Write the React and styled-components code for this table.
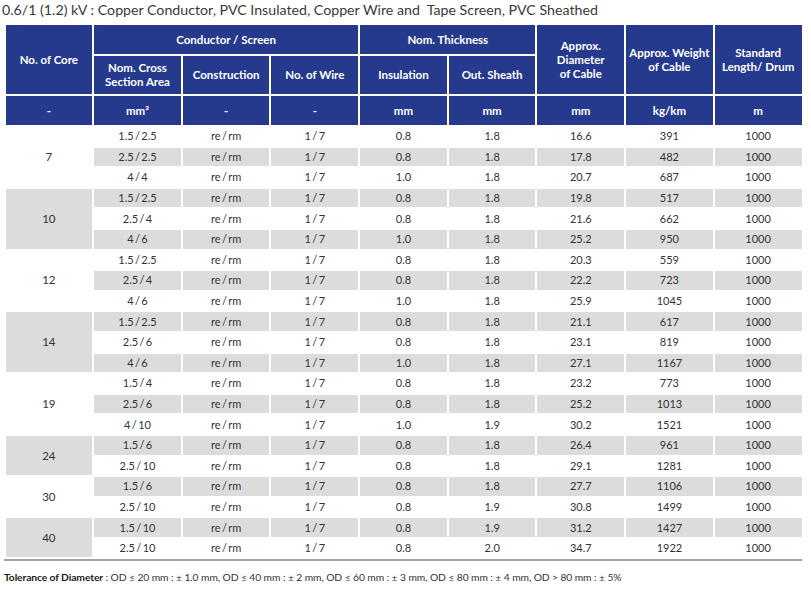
import React from 'react';
import styled, { createGlobalStyle } from 'styled-components';

const GlobalStyle = createGlobalStyle`
  body {
    margin: 0;
    background: #ffffff;
    font-family: Lato, "Liberation Sans", sans-serif;
  }
`;

const Page = styled.div`
  width: 811px;
  height: 597px;
  overflow: hidden;
`;

const Title = styled.h1`
  margin: 0;
  padding: 1px 0 0 2px;
  height: 22px;
  font-size: 14.2px;
  font-weight: 400;
  color: #3a3a3a;
  white-space: pre;
`;

const Table = styled.table`
  width: 800px;
  margin-left: 3.5px;
  table-layout: fixed;
  border-collapse: separate;
  border-spacing: 2.5px 2px;
`;

const HeadCell = styled.th`
  background: #263a8d;
  color: #ffffff;
  font-size: 11.5px;
  font-weight: 700;
  line-height: 14px;
  text-align: center;
  vertical-align: middle;
  padding: 0 2px;
  height: ${(p) => p.$h || 29}px;
`;

const Cell = styled.td`
  background: ${(p) => (p.$shade ? '#dcdcdd' : '#ffffff')};
  color: #333333;
  font-size: 11px;
  text-align: center;
  vertical-align: middle;
  height: 18.6px;
  padding: 0;
  line-height: 14px;
`;

const CoreCell = styled(Cell)`
  font-size: 11.5px;
`;

const Rule = styled.div`
  margin: 0 9px 0 4px;
  height: 2px;
  background: #a3a3a3;
`;

const Note = styled.p`
  margin: 10px 0 0 4px;
  font-size: 10.3px;
  color: #333333;
  letter-spacing: -0.1px;

  b {
    font-weight: 700;
    color: #1c1c1c;
  }
`;

// thin spaces around slashes, as in the print layout
const s = (a, b) => `${a}\u2009/\u2009${b}`;

const groups = [
  ['7', [
    [s('1.5', '2.5'), '0.8', '1.8', '16.6', '391'],
    [s('2.5', '2.5'), '0.8', '1.8', '17.8', '482'],
    [s('4', '4'), '1.0', '1.8', '20.7', '687'],
  ]],
  ['10', [
    [s('1.5', '2.5'), '0.8', '1.8', '19.8', '517'],
    [s('2.5', '4'), '0.8', '1.8', '21.6', '662'],
    [s('4', '6'), '1.0', '1.8', '25.2', '950'],
  ]],
  ['12', [
    [s('1.5', '2.5'), '0.8', '1.8', '20.3', '559'],
    [s('2.5', '4'), '0.8', '1.8', '22.2', '723'],
    [s('4', '6'), '1.0', '1.8', '25.9', '1045'],
  ]],
  ['14', [
    [s('1.5', '2.5'), '0.8', '1.8', '21.1', '617'],
    [s('2.5', '6'), '0.8', '1.8', '23.1', '819'],
    [s('4', '6'), '1.0', '1.8', '27.1', '1167'],
  ]],
  ['19', [
    [s('1.5', '4'), '0.8', '1.8', '23.2', '773'],
    [s('2.5', '6'), '0.8', '1.8', '25.2', '1013'],
    [s('4', '10'), '1.0', '1.9', '30.2', '1521'],
  ]],
  ['24', [
    [s('1.5', '6'), '0.8', '1.8', '26.4', '961'],
    [s('2.5', '10'), '0.8', '1.8', '29.1', '1281'],
  ]],
  ['30', [
    [s('1.5', '6'), '0.8', '1.8', '27.7', '1106'],
    [s('2.5', '10'), '0.8', '1.9', '30.8', '1499'],
  ]],
  ['40', [
    [s('1.5', '10'), '0.8', '1.9', '31.2', '1427'],
    [s('2.5', '10'), '0.8', '2.0', '34.7', '1922'],
  ]],
];

const units = ['-', 'mm²', '-', '-', 'mm', 'mm', 'mm', 'kg/km', 'm'];

const App = () => {
  let index = 0;
  const body = [];

  groups.forEach(([core, rows], g) => {
    rows.forEach((r, i) => {
      const shade = index % 2 === 1;
      body.push(
        <tr key={index}>
          {i === 0 && (
            <CoreCell rowSpan={rows.length} $shade={g % 2 === 1}>
              {core}
            </CoreCell>
          )}
          <Cell $shade={shade}>{r[0]}</Cell>
          <Cell $shade={shade}>{s('re', 'rm')}</Cell>
          <Cell $shade={shade}>{s('1', '7')}</Cell>
          <Cell $shade={shade}>{r[1]}</Cell>
          <Cell $shade={shade}>{r[2]}</Cell>
          <Cell $shade={shade}>{r[3]}</Cell>
          <Cell $shade={shade}>{r[4]}</Cell>
          <Cell $shade={shade}>1000</Cell>
        </tr>
      );
      index += 1;
    });
  });

  return (
    <Page>
      <GlobalStyle />
      <Title>0.6/1 (1.2) kV : Copper Conductor, PVC Insulated, Copper Wire and  Tape Screen, PVC Sheathed</Title>
      <Table>
        <thead>
          <tr>
            <HeadCell rowSpan={2}>No. of Core</HeadCell>
            <HeadCell colSpan={3}>Conductor / Screen</HeadCell>
            <HeadCell colSpan={2}>Nom. Thickness</HeadCell>
            <HeadCell rowSpan={2}>Approx.<br />Diameter<br />of Cable</HeadCell>
            <HeadCell rowSpan={2}>Approx. Weight<br />of Cable</HeadCell>
            <HeadCell rowSpan={2}>Standard<br />Length/ Drum</HeadCell>
          </tr>
          <tr>
            <HeadCell $h={38}>Nom. Cross<br />Section Area</HeadCell>
            <HeadCell $h={38}>Construction</HeadCell>
            <HeadCell $h={38}>No. of Wire</HeadCell>
            <HeadCell $h={38}>Insulation</HeadCell>
            <HeadCell $h={38}>Out. Sheath</HeadCell>
          </tr>
          <tr>
            {units.map((u, i) => (
              <HeadCell key={i} $h={29}>{u}</HeadCell>
            ))}
          </tr>
        </thead>
        <tbody>{body}</tbody>
      </Table>
      <Rule />
      <Note>
        <b>Tolerance of Diameter</b> : OD ≤ 20 mm : ± 1.0 mm, OD ≤ 40 mm : ± 2 mm, OD ≤ 60 mm : ± 3 mm, OD ≤ 80 mm : ± 4 mm, OD &gt; 80 mm : ± 5%
      </Note>
    </Page>
  );
};

export default App;
